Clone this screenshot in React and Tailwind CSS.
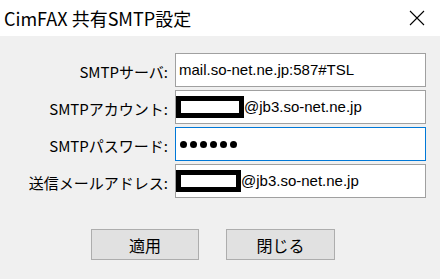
import React from 'react';

const LABEL_FONT = { fontFamily: '"Noto Sans CJK JP", "Noto Sans", sans-serif' };
const INPUT_FONT = { fontFamily: '"Liberation Sans", Arial, sans-serif' };

const Redact = ({ w }) => (
  <span className={`inline-block h-[22px] ${w} border-[5px] border-black bg-white box-border`} />
);

const Field = ({ label, focused, children }) => (
  <div className="flex items-center h-[34px] mb-[3px]">
    <div className="w-[168px] text-right text-[15px] text-black pr-[3px] pt-[4px]" style={LABEL_FONT}>
      {label}
    </div>
    <div
      className={`w-[251px] h-[34px] ml-[4px] flex items-center px-[3px] bg-white border ${
        focused ? 'border-[#0078d7]' : 'border-[#a0a0a0]'
      }`}
    >
      {children}
    </div>
  </div>
);

export default function App() {
  return (
    <div className="w-[440px] h-[279px] bg-[#f0f0f0] overflow-hidden flex flex-col">
      {/* タイトルバー */}
      <div className="h-[36px] bg-white flex items-center justify-between pl-[4px] pr-[15px] shrink-0">
        <span className="text-[18px] text-black leading-none" style={LABEL_FONT}>
          CimFAX 共有SMTP設定
        </span>
        <svg width="16" height="16" viewBox="0 0 16 16">
          <path d="M1 1 L15 15 M15 1 L1 15" stroke="#000" strokeWidth="1.1" />
        </svg>
      </div>

      <div className="pt-[17px] pl-[3px]">
        <Field label="SMTPサーバ:">
          <span className="text-[15px] text-black" style={INPUT_FONT}>
            mail.so-net.ne.jp:587#TSL
          </span>
        </Field>
        <Field label="SMTPアカウント:">
          <div className="flex items-center -ml-[3px]">
            <Redact w="w-[68px]" />
            <span className="text-[15px] text-black" style={INPUT_FONT}>
              @jb3.so-net.ne.jp
            </span>
          </div>
        </Field>
        <Field label="SMTPパスワード:" focused>
          <div className="flex gap-[3px] pl-[1px]">
            {[0, 1, 2, 3, 4, 5].map((i) => (
              <span key={i} className="w-[7px] h-[7px] rounded-full bg-black" />
            ))}
          </div>
        </Field>
        <Field label="送信メールアドレス:">
          <div className="flex items-center -ml-[3px]">
            <Redact w="w-[65px]" />
            <span className="text-[15px] text-black" style={INPUT_FONT}>
              @jb3.so-net.ne.jp
            </span>
          </div>
        </Field>
      </div>

      {/* ボタン */}
      <div className="flex gap-[27px] pl-[91px] mt-[28px]">
        <button className="w-[108px] h-[31px] bg-[#e1e1e1] border border-[#adadad] text-[16px] text-black" style={LABEL_FONT}>
          適用
        </button>
        <button className="w-[109px] h-[31px] bg-[#e1e1e1] border border-[#adadad] text-[16px] text-black" style={LABEL_FONT}>
          閉じる
        </button>
      </div>
    </div>
  );
}
